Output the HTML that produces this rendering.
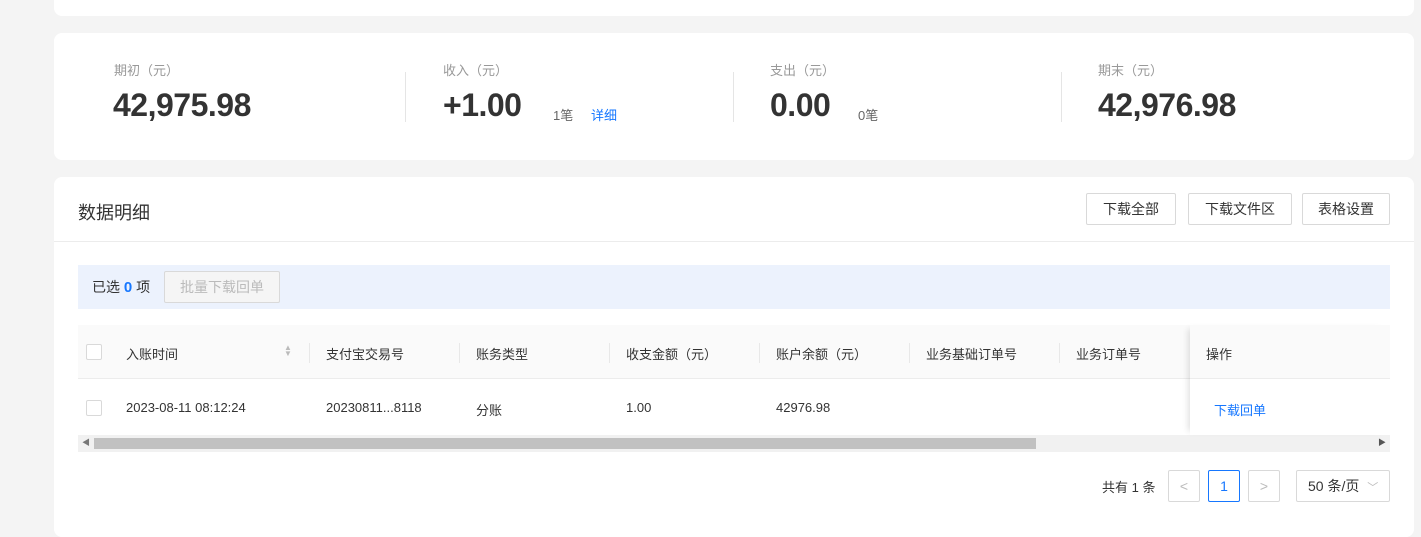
<!DOCTYPE html>
<html><head><meta charset="utf-8"><style>
*{box-sizing:border-box;margin:0;padding:0}
body{width:1421px;height:519px;background:#f4f4f4;font-family:"Liberation Sans","Noto Sans CJK SC",sans-serif;color:#333;position:relative;overflow:hidden;font-size:13px}
.card{position:absolute;left:54px;width:1360px;background:#fff;border-radius:8px}
.abs{position:absolute;white-space:nowrap}
.lbl{font-size:13px;color:#999}
.big{font-size:32px;font-weight:bold;color:#333;letter-spacing:-0.5px}
.sep{position:absolute;top:39px;width:1px;height:50px;background:#e5e5e5}
.btn{position:absolute;top:16px;height:32px;border:1px solid #d9d9d9;border-radius:2px;font-size:14px;line-height:30px;text-align:center;color:#333}
.th{position:absolute;top:19px;font-size:13px;color:#333}
.cs{position:absolute;top:18px;width:1px;height:20px;background:#e8e8e8}
.chk{position:absolute;width:16px;height:16px;border:1px solid #d9d9d9;border-radius:2px;background:#fff}
.pg{position:absolute;top:293px;width:32px;height:32px;border:1px solid #d9d9d9;border-radius:2px;text-align:center;line-height:30px;color:#bbb;font-size:14px}
</style></head><body>
<div class="card" style="top:-10px;height:26px"></div>
<div class="card" style="top:33px;height:127px">
  <div class="abs lbl" style="left:60px;top:27px">期初（元）</div>
  <div class="abs big" style="left:59px;top:54px">42,975.98</div>
  <div class="sep" style="left:351px"></div>
  <div class="abs lbl" style="left:389px;top:27px">收入（元）</div>
  <div class="abs big" style="left:389px;top:54px">+1.00</div>
  <div class="abs" style="left:499px;top:72px;font-size:13px;color:#666">1笔</div>
  <div class="abs" style="left:537px;top:72px;font-size:13px;color:#1677ff">详细</div>
  <div class="sep" style="left:679px"></div>
  <div class="abs lbl" style="left:716px;top:27px">支出（元）</div>
  <div class="abs big" style="left:716px;top:54px">0.00</div>
  <div class="abs" style="left:804px;top:72px;font-size:13px;color:#666">0笔</div>
  <div class="sep" style="left:1007px"></div>
  <div class="abs lbl" style="left:1044px;top:27px">期末（元）</div>
  <div class="abs big" style="left:1044px;top:54px">42,976.98</div>
</div>
<div class="card" style="top:177px;height:360px">
  <div class="abs" style="left:24px;top:22px;font-size:18px;color:#333">数据明细</div>
  <div class="btn" style="left:1032px;width:90px">下载全部</div>
  <div class="btn" style="left:1134px;width:104px">下载文件区</div>
  <div class="btn" style="left:1248px;width:88px">表格设置</div>
  <div class="abs" style="left:0;top:64px;width:1360px;height:1px;background:#ececec"></div>
  <div class="abs" style="left:24px;top:88px;width:1312px;height:44px;background:#ecf2fd"></div>
  <div class="abs" style="left:38px;top:100px;font-size:14px">已选 <b style="color:#1677ff;font-size:15px">0</b> 项</div>
  <div class="abs" style="left:110px;top:94px;width:116px;height:32px;border:1px solid #d9d9d9;background:#f5f5f5;border-radius:2px;color:#bbb;font-size:14px;line-height:30px;text-align:center">批量下载回单</div>
  <!-- table -->
  <div class="abs" style="left:24px;top:148px;width:1312px;height:128px">
    <div class="abs" style="left:0;top:0;width:1312px;height:54px;background:#fafafa;border-bottom:1px solid #ececec"></div>
    <div class="chk" style="left:8px;top:19px"></div>
    <div class="th" style="left:48px">入账时间</div>
    <div class="abs" style="left:206px;top:20px;font-size:8px;color:#bbb;line-height:6px">▲<br>▼</div>
    <div class="cs" style="left:231px"></div>
    <div class="th" style="left:248px">支付宝交易号</div>
    <div class="cs" style="left:381px"></div>
    <div class="th" style="left:398px">账务类型</div>
    <div class="cs" style="left:531px"></div>
    <div class="th" style="left:548px">收支金额（元）</div>
    <div class="cs" style="left:681px"></div>
    <div class="th" style="left:698px">账户余额（元）</div>
    <div class="cs" style="left:831px"></div>
    <div class="th" style="left:848px">业务基础订单号</div>
    <div class="cs" style="left:981px"></div>
    <div class="th" style="left:998px">业务订单号</div>
    <div class="chk" style="left:8px;top:75px"></div>
    <div class="abs" style="left:48px;top:75px">2023-08-11 08:12:24</div>
    <div class="abs" style="left:248px;top:75px">20230811...8118</div>
    <div class="abs" style="left:398px;top:75px">分账</div>
    <div class="abs" style="left:548px;top:75px">1.00</div>
    <div class="abs" style="left:698px;top:75px">42976.98</div>
    <div class="abs" style="left:0;top:110px;width:1312px;height:17px;background:#f1f1f1"></div>
    <div class="abs" style="left:16px;top:113px;width:942px;height:11px;background:#c1c1c1"></div>
    <div class="abs" style="left:4px;top:112px;font-size:8px;color:#777">◀</div>
    <div class="abs" style="left:1300px;top:112px;font-size:8px;color:#555">▶</div>
    <!-- fixed column -->
    <div class="abs" style="left:1112px;top:0;width:200px;height:110px;background:#fff;box-shadow:-6px 0 6px -4px rgba(0,0,0,0.12)">
      <div class="abs" style="left:0;top:0;width:200px;height:54px;background:#fafafa;border-bottom:1px solid #ececec"></div>
      <div class="th" style="left:16px">操作</div>
      <div class="abs" style="left:24px;top:75px;color:#1677ff">下载回单</div>
    </div>
  </div>
  <div class="abs" style="left:1048px;top:300px;font-size:13px">共有 1 条</div>
  <div class="pg" style="left:1114px">&lt;</div>
  <div class="pg" style="left:1154px;border-color:#1677ff;color:#1677ff">1</div>
  <div class="pg" style="left:1194px">&gt;</div>
  <div class="pg" style="left:1242px;width:94px;color:#333;text-align:left;padding-left:11px">50 条/页 <span style="color:#bbb;font-size:11px;margin-left:4px">﹀</span></div>
</div>
</body></html>
